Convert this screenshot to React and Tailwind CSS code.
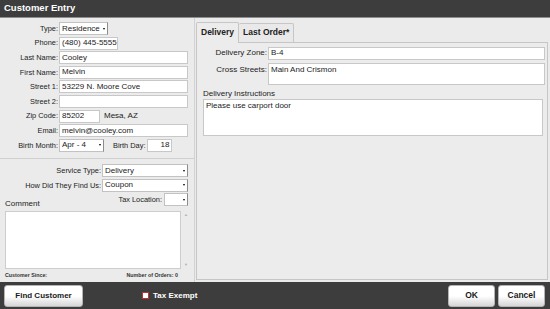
import React from 'react';

const Arrow = () => (
  <div className="w-0 h-0 border-l-[1.5px] border-r-[1.5px] border-t-[2px] border-l-transparent border-r-transparent border-t-black" />
);

// Dropdown with the little square button on the right
const Select = ({ value, className = '' }) => (
  <div className={`h-[13px] bg-white border border-[#c2c2c2] border-r-[#8c8c8c] flex items-center ${className}`}>
    <span className="flex-1 pl-[2px] text-[8px] leading-none truncate">{value}</span>
    <div className="w-[6px] h-full flex items-center justify-center">
      <Arrow />
    </div>
  </div>
);

const Field = ({ value, className = '', right = false }) => (
  <div
    className={`h-[13px] bg-white border border-[#c8c8c8] px-[2px] flex items-center text-[8px] leading-none whitespace-nowrap ${
      right ? 'justify-end' : ''
    } ${className}`}
  >
    {value}
  </div>
);

const Row = ({ label, children }) => (
  <div className="flex items-center h-[13px]">
    <div className="w-[59px] text-right pr-[1px] text-[7.4px] leading-none">{label}</div>
    {children}
  </div>
);

const WideRow = ({ label, children }) => (
  <div className="flex items-center h-[13px]">
    <div className="w-[102px] text-right pr-[1px] text-[7.4px] leading-none">{label}</div>
    {children}
  </div>
);

const Button = ({ children, className = '' }) => (
  <button
    className={`h-[22px] rounded-[3px] bg-gradient-to-b from-white via-white to-[#d6d6d6] border border-[#b5b5b5] font-bold text-[#1a1a1a] ${className}`}
  >
    {children}
  </button>
);

export default function App() {
  return (
    <div className="w-[550px] h-[309px] flex flex-col bg-[#ebebeb] text-[#222] font-['Liberation_Sans',Arial,sans-serif] overflow-hidden">
      {/* Title */}
      <div className="h-[18px] bg-[#3d3d3d] border-b border-[#8e8e8e] flex items-center px-[4px] text-white font-bold text-[9.5px]">
        Customer Entry
      </div>

      <div className="flex-1 flex min-h-0">
        {/* Left: customer details */}
        <div className="w-[195px] border-r border-[#d2d2d2] flex flex-col">
          <div className="pt-[4px] flex flex-col gap-[1.6px]">
            <Row label="Type:">
              <Select value="Residence" className="w-[49px]" />
            </Row>
            <Row label="Phone:">
              <Field value="(480) 445-5555" className="w-[59px] px-[1.5px]" />
            </Row>
            <Row label="Last Name:">
              <Field value="Cooley" className="w-[129px]" />
            </Row>
            <Row label="First Name:">
              <Field value="Melvin" className="w-[129px]" />
            </Row>
            <Row label="Street 1:">
              <Field value="53229 N. Moore Cove" className="w-[129px]" />
            </Row>
            <Row label="Street 2:">
              <Field value="" className="w-[129px]" />
            </Row>
            <Row label="Zip Code:">
              <Field value="85202" className="w-[41px]" />
              <span className="ml-[4px] text-[8px]">Mesa, AZ</span>
            </Row>
            <Row label="Email:">
              <Field value="melvin@cooley.com" className="w-[129px]" />
            </Row>
            <Row label="Birth Month:">
              <Select value="Apr - 4" className="w-[45px]" />
              <span className="ml-[9px] text-[7.4px]">Birth Day:</span>
              <Field value="18" right className="ml-[2px] w-[25px]" />
            </Row>
          </div>

          <div className="mt-[6px] border-t border-[#cfcfcf] pt-[5.5px] flex flex-col gap-[1.6px]">
            <WideRow label="Service Type:">
              <Select value="Delivery" className="w-[86px]" />
            </WideRow>
            <WideRow label="How Did They Find Us:">
              <Select value="Coupon" className="w-[86px]" />
            </WideRow>
            <div className="flex items-start">
              <span className="mt-[6px] pl-[5px] text-[8px] leading-[10px]">Comment</span>
              <div className="ml-auto flex items-center h-[13px] pr-[6px]">
                <span className="text-[7.4px] leading-none pr-[2px]">Tax Location:</span>
                <Select value="" className="w-[24px]" />
              </div>
            </div>
          </div>

          <div className="mt-[1.5px] flex items-stretch pl-[5px]">
            <div className="w-[176px] h-[58px] bg-white border border-[#cdcdcd]" />
            <div className="ml-[3px] flex flex-col justify-between py-[2px] text-[#b0b0b0] text-[4px] leading-none">
              <span>▲</span>
              <span>▼</span>
            </div>
          </div>

          <div className="flex-1 flex items-center justify-between pl-[5px] pr-[16px] text-[5.3px] font-bold text-[#333]">
            <span>Customer Since:</span>
            <span>Number of Orders: 0</span>
          </div>
        </div>

        {/* Right: tabs */}
        <div className="flex-1 flex flex-col pt-[4px] pl-[1px] pr-[2px] pb-[2px]">
          <div className="flex items-end">
            <div className="h-[21px] px-[4px] flex items-center border border-b-0 border-[#c6c6c6] rounded-t-[2px] bg-[#ececec] text-[8.5px] font-bold relative z-10 -mb-px pb-px">
              Delivery
            </div>
            <div className="h-[19.5px] px-[4px] flex items-center border border-l-0 border-b-0 border-[#c6c6c6] rounded-t-[2px] bg-[#e9e9e9] text-[8.5px] font-bold">
              Last Order*
            </div>
          </div>
          <div className="flex-1 border border-[#c6c6c6] bg-[#ececec] pt-[4px] pr-[2px] flex flex-col">
            <div className="flex items-center h-[12px]">
              <div className="w-[71px] text-right pr-[1px] text-[8px] leading-none">Delivery Zone:</div>
              <Field value="B-4" className="flex-1 h-[12px]" />
            </div>
            <div className="flex items-start mt-[4px]">
              <div className="w-[71px] text-right pr-[1px] text-[8px] leading-none pt-[3px]">Cross Streets:</div>
              <div className="flex-1 h-[21.5px] bg-white border border-[#c8c8c8] px-[2px] pt-[2px] text-[8px] leading-none">
                Main And Crismon
              </div>
            </div>
            <div className="mt-[4.5px] pl-[6px] text-[8px] leading-[10px]">Delivery Instructions</div>
            <div className="flex items-start pl-[6px] pr-[2px]">
              <div className="flex-1 h-[36.5px] bg-white border border-[#c8c8c8] px-[2px] pt-[2px] text-[8px] leading-none">
                Please use carport door
              </div>
            </div>
          </div>
        </div>
      </div>

      {/* Bottom bar */}
      <div className="h-[27px] bg-[#3d3d3d] flex items-center px-[4px]">
        <Button className="w-[79px] text-[8px]">Find Customer</Button>
        <div className="ml-[59px] flex items-center">
          <div className="w-[7px] h-[7px] bg-white border border-[#c0302f]" />
          <span className="ml-[4px] text-white font-bold text-[8px]">Tax Exempt</span>
        </div>
        <div className="ml-auto flex gap-[3px] pr-[1px]">
          <Button className="w-[47px] text-[8.5px]">OK</Button>
          <Button className="w-[47px] text-[8.5px]">Cancel</Button>
        </div>
      </div>
    </div>
  );
}
